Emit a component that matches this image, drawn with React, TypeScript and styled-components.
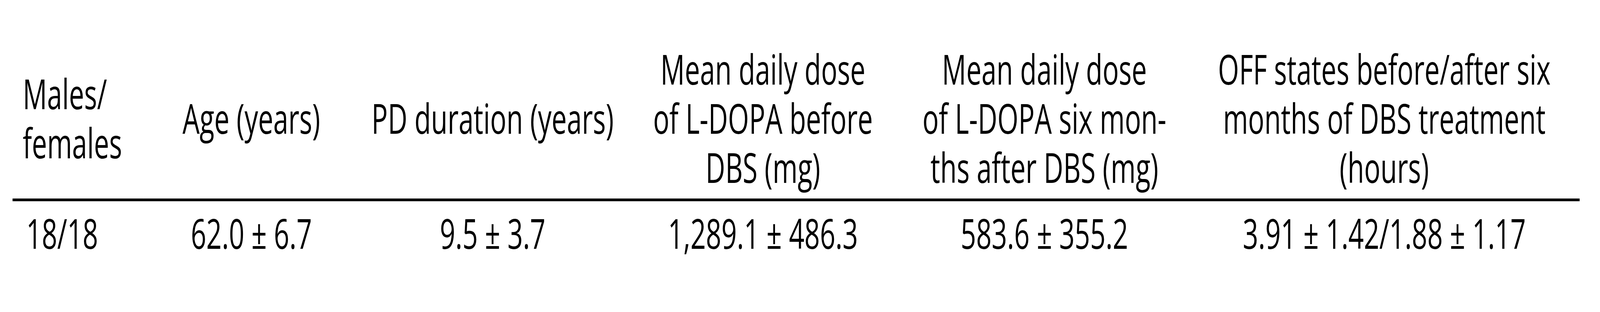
import React from 'react'
import styled, { createGlobalStyle } from 'styled-components'

const DESIGN_WIDTH = 6327

const GlobalStyle = createGlobalStyle`
    html, body {
        margin: 0;
        padding: 0;
        background: #ffffff;
        overflow: hidden;
    }
`

const columns = [
    { width: 518, align: 'left' as const },
    { width: 852, align: 'center' as const },
    { width: 1056, align: 'center' as const },
    { width: 1082, align: 'center' as const },
    { width: 1144, align: 'center' as const },
    { width: 1544, align: 'center' as const },
]

const headers: string[][] = [
    ['Males/', 'females'],
    ['Age (years)'],
    ['PD duration (years)'],
    ['Mean daily dose', 'of L-DOPA before', 'DBS (mg)'],
    ['Mean daily dose', 'of L-DOPA six mon-', 'ths after DBS (mg)'],
    ['OFF states before/after six', 'months of DBS treatment', '(hours)'],
]

const values = [
    '18/18',
    '62.0 ± 6.7',
    '9.5 ± 3.7',
    '1,289.1 ± 486.3',
    '583.6 ± 355.2',
    '3.91 ± 1.42/1.88 ± 1.17',
]

// the frame may be narrower than the sheet, so squeeze the sheet to fit its width
function useFitScale() {
    const [scale, setScale] = React.useState(() => Math.min(1, window.innerWidth / DESIGN_WIDTH))
    React.useEffect(() => {
        const onResize = () => setScale(Math.min(1, window.innerWidth / DESIGN_WIDTH))
        window.addEventListener('resize', onResize)
        return () => window.removeEventListener('resize', onResize)
    }, [])
    return scale
}

export default function App() {
    const scale = useFitScale()
    return (
        <Frame>
            <GlobalStyle />
            <Sheet style={{ transform: `scaleX(${scale})` }}>
                <Table>
                    <colgroup>
                        {columns.map((c, i) => (
                            <col key={i} style={{ width: c.width }} />
                        ))}
                    </colgroup>
                    <thead>
                        <tr>
                            {headers.map((lines, i) => (
                                <HeadCell key={i} $align={columns[i].align} $first={i === 0}>
                                    {lines.map((line, j) => (
                                        <React.Fragment key={j}>
                                            {j > 0 && <br />}
                                            {line}
                                        </React.Fragment>
                                    ))}
                                </HeadCell>
                            ))}
                        </tr>
                    </thead>
                    <tbody>
                        <tr>
                            {values.map((v, i) => (
                                <BodyCell key={i} $align={columns[i].align} $first={i === 0}>
                                    {v}
                                </BodyCell>
                            ))}
                        </tr>
                    </tbody>
                </Table>
            </Sheet>
        </Frame>
    )
}

const Frame = styled.div`
    width: 100vw;
    height: 800px;
    overflow: hidden;
    background: #ffffff;
`

const Sheet = styled.div`
    width: ${DESIGN_WIDTH}px;
    height: 800px;
    padding-left: 50px;
    box-sizing: border-box;
    transform-origin: 0 0;
    font-family: "Open Sans", "Noto Sans", "DejaVu Sans", sans-serif;
    color: #000000;
`

const Table = styled.table`
    width: 6196px;
    table-layout: fixed;
    border-collapse: collapse;
    font-size: 107px;
    line-height: 126px;
`

const HeadCell = styled.th<{ $align: 'left' | 'center'; $first: boolean }>`
    font-weight: 400;
    text-align: ${p => p.$align};
    vertical-align: middle;
    white-space: nowrap;
    padding: 113px 0 18px ${p => (p.$first ? '40px' : '0')};
    border-bottom: 7px solid #000000;
`

const BodyCell = styled.td<{ $align: 'left' | 'center'; $first: boolean }>`
    text-align: ${p => p.$align};
    white-space: nowrap;
    padding: 18px 0 0 ${p => (p.$first ? '54px' : '0')};
`
